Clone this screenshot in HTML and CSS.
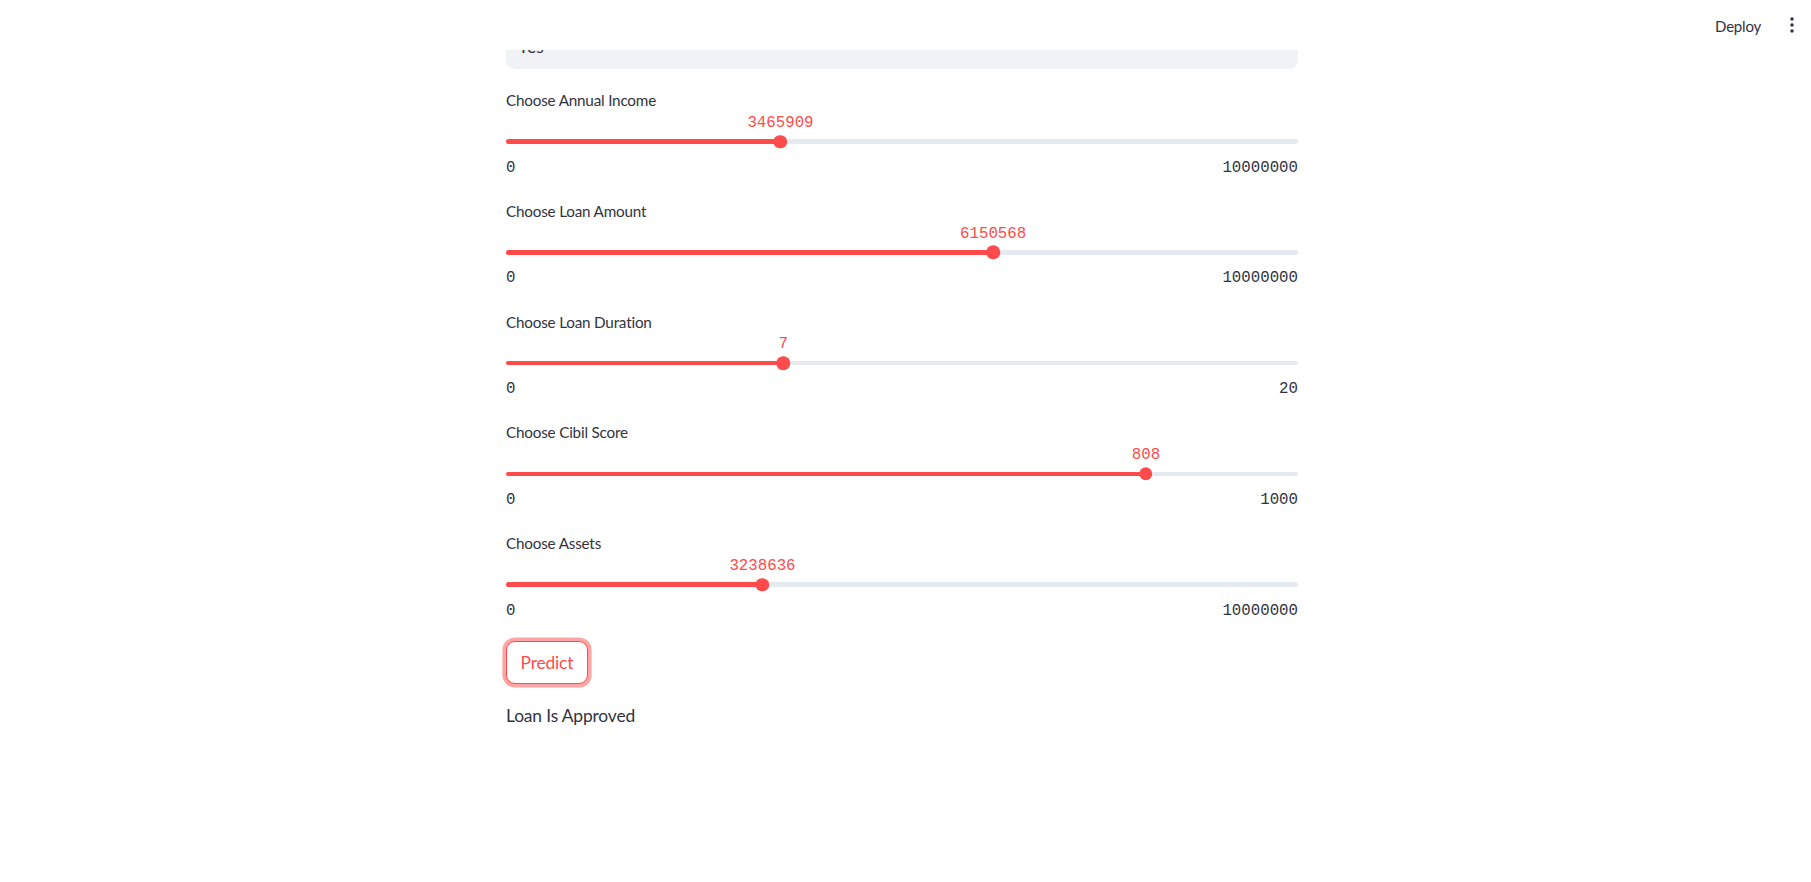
FILE: index.html
```html
<!DOCTYPE html>
<html lang="en">
<head>
<meta charset="utf-8">
<title>Loan Approval</title>
<link rel="stylesheet" href="styles.css">
</head>
<body>
<header class="app-header">
  <div class="toolbar">
    <span class="deploy">Deploy</span>
    <span class="menu" aria-label="Main menu">
      <svg width="4" height="16" viewBox="0 0 4 16"><circle cx="2" cy="2" r="1.75" fill="#31333f"/><circle cx="2" cy="8" r="1.75" fill="#31333f"/><circle cx="2" cy="14" r="1.75" fill="#31333f"/></svg>
    </span>
  </div>
</header>
<main class="app-main">
  <div class="block">
    <div class="select-box"><span>Yes</span></div>

    <div class="slider">
      <div class="slider-label">Choose Annual Income</div>
      <div class="slider-body">
        <div class="track-wrap">
          <div class="track"><div class="fill" style="width:34.65909%"></div></div>
          <div class="thumb" style="left:34.65909%"><span class="thumb-value">3465909</span></div>
        </div>
        <div class="ticks"><span>0</span><span>10000000</span></div>
      </div>
    </div>

    <div class="slider">
      <div class="slider-label">Choose Loan Amount</div>
      <div class="slider-body">
        <div class="track-wrap">
          <div class="track"><div class="fill" style="width:61.50568%"></div></div>
          <div class="thumb" style="left:61.50568%"><span class="thumb-value">6150568</span></div>
        </div>
        <div class="ticks"><span>0</span><span>10000000</span></div>
      </div>
    </div>

    <div class="slider">
      <div class="slider-label">Choose Loan Duration</div>
      <div class="slider-body">
        <div class="track-wrap">
          <div class="track"><div class="fill" style="width:35%"></div></div>
          <div class="thumb" style="left:35%"><span class="thumb-value">7</span></div>
        </div>
        <div class="ticks"><span>0</span><span>20</span></div>
      </div>
    </div>

    <div class="slider">
      <div class="slider-label">Choose Cibil Score</div>
      <div class="slider-body">
        <div class="track-wrap">
          <div class="track"><div class="fill" style="width:80.8%"></div></div>
          <div class="thumb" style="left:80.8%"><span class="thumb-value">808</span></div>
        </div>
        <div class="ticks"><span>0</span><span>1000</span></div>
      </div>
    </div>

    <div class="slider">
      <div class="slider-label">Choose Assets</div>
      <div class="slider-body">
        <div class="track-wrap">
          <div class="track"><div class="fill" style="width:32.38636%"></div></div>
          <div class="thumb" style="left:32.38636%"><span class="thumb-value">3238636</span></div>
        </div>
        <div class="ticks"><span>0</span><span>10000000</span></div>
      </div>
    </div>

    <button class="btn" type="button">Predict</button>

    <p class="result">Loan Is Approved</p>
  </div>
</main>
</body>
</html>
```

FILE: styles.css
```css
* {
  box-sizing: border-box;
}

html, body {
  margin: 0;
  padding: 0;
  background: #ffffff;
}

body {
  font-family: Lato, "Open Sans", sans-serif;
  color: #31333f;
}

.app-header {
  position: fixed;
  top: 0;
  left: 0;
  right: 0;
  height: 50px;
  background: #ffffff;
  z-index: 10;
}

.toolbar {
  height: 100%;
  display: flex;
  justify-content: flex-end;
  align-items: center;
  padding-right: 17px;
  gap: 29px;
}

.deploy {
  font-size: 15px;
  letter-spacing: -0.2px;
  color: #31333f;
  line-height: 20px;
  padding-top: 1px;
}

.menu {
  display: flex;
  align-items: center;
  height: 16px;
}

.menu svg {
  display: block;
}

.app-main {
  padding-right: 7px;
}

.block {
  max-width: 792px;
  margin: 0 auto;
  padding-top: 24px;
  padding-bottom: 160px;
  display: flex;
  flex-direction: column;
  gap: 18px;
}

.select-box {
  height: 45px;
  background: #f0f2f6;
  border-radius: 9px;
  display: flex;
  align-items: center;
  padding-left: 12px;
  font-size: 17.4px;
}

.slider {
  display: flex;
  flex-direction: column;
}

.slider-label {
  font-size: 15.25px;
  letter-spacing: -0.2px;
  line-height: 27px;
  height: 27px;
}

.slider-body {
  padding-top: 18px;
}

.track-wrap {
  position: relative;
  height: 19px;
  display: flex;
  align-items: center;
}

.track {
  width: 100%;
  height: 4.5px;
  border-radius: 4px;
  background: #e5e9f0;
  overflow: hidden;
}

.fill {
  height: 100%;
  background: #ff4b4b;
}

.thumb {
  position: absolute;
  top: 50%;
  width: 13.5px;
  height: 13.5px;
  border-radius: 50%;
  background: #ff4b4b;
  transform: translate(-50%, -50%);
}

.thumb-value {
  position: absolute;
  bottom: calc(100% + 2.75px);
  left: 50%;
  transform: translateX(-50%);
  line-height: 18px;
  font-family: "Liberation Mono", "DejaVu Sans Mono", monospace;
  font-size: 15.75px;
  color: #ff4b4b;
  white-space: nowrap;
}

.ticks {
  margin-top: 5.5px;
  height: 23.3px;
  line-height: 23.3px;
  display: flex;
  justify-content: space-between;
  font-family: "Liberation Mono", "DejaVu Sans Mono", monospace;
  font-size: 15.75px;
  color: #31333f;
}

.btn {
  align-self: flex-start;
  height: 43px;
  padding: 0 13.5px;
  border: 1px solid #ff4b4b;
  border-radius: 9px;
  background: #ffffff;
  color: #ff4b4b;
  font-family: Lato, "Open Sans", sans-serif;
  font-size: 17.4px;
  letter-spacing: -0.15px;
  box-shadow: 0 0 0 3.6px rgba(255, 75, 75, 0.5);
  cursor: pointer;
}

.result {
  margin: 0;
  font-size: 17.4px;
  letter-spacing: -0.15px;
  line-height: 28.8px;
}
```
